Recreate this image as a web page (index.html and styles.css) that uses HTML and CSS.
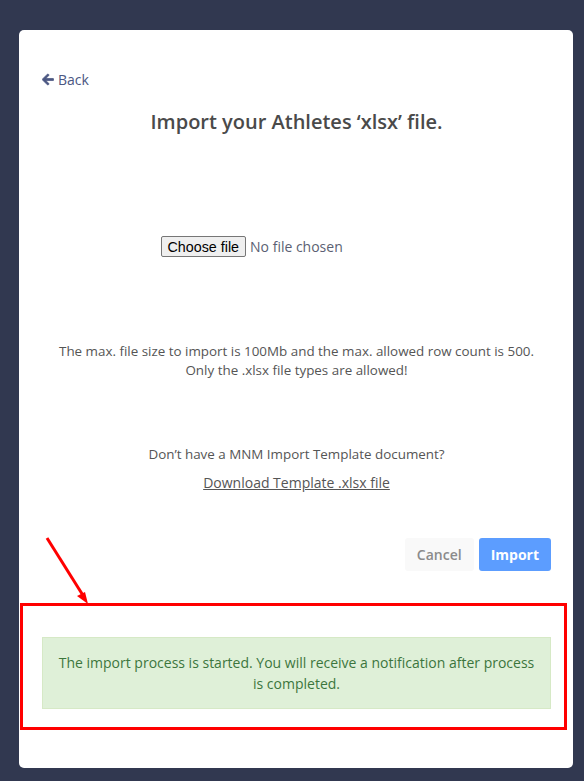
FILE: index.html
```html
<!DOCTYPE html>
<html>
<head>
<meta charset="utf-8">
<link rel="stylesheet" href="styles.css">
</head>
<body>
<div class="card">
  <a class="back" href="#"><svg class="back-icon" viewBox="0 0 448 512" width="12" height="13"><path fill="currentColor" d="M257.5 445.1l-22.2 22.2c-9.4 9.4-24.6 9.4-33.900 0L7 273c-9.4-9.4-9.4-24.6 0-33.9L201.4 44.7c9.4-9.4 24.6-9.4 33.9 0l22.2 22.2c9.5 9.5 9.3 25-.4 34.3L136.6 216H424c13.3 0 24 10.7 24 24v32c0 13.3-10.7 24-24 24H136.6l120.5 114.8c9.8 9.3 10 24.8.4 34.3z"/></svg><span>Back</span></a>
  <h2 class="title">Import your Athletes ‘xlsx’ file.</h2>
  <div class="file-row">
    <button class="file-btn" type="button">Choose file</button><span class="file-name">No file chosen</span>
  </div>
  <p class="limits">The max. file size to import is 100Mb and the max. allowed row count is 500.<br>Only the .xlsx file types are allowed!</p>
  <p class="template-q">Don’t have a MNM Import Template document?</p>
  <p class="template-link"><a href="#">Download Template .xlsx file</a></p>
  <div class="actions">
    <button class="btn btn-cancel" type="button">Cancel</button>
    <button class="btn btn-import" type="button">Import</button>
  </div>
  <div class="highlight">
    <div class="alert">The import process is started. You will receive a notification after process is completed.</div>
  </div>
  <svg class="pointer" width="50" height="72" viewBox="0 0 50 72">
    <line x1="1" y1="1" x2="38" y2="60" stroke="#ff0000" stroke-width="3"/>
    <polygon points="42,67 31,59 39,55" fill="#ff0000"/>
  </svg>
</div>
</body>
</html>
```

FILE: styles.css
```css
html, body {
  margin: 0;
  padding: 0;
}
body {
  background: #313850;
  font-family: "Open Sans", "DejaVu Sans", sans-serif;
  padding: 30px 11px 14px 19px;
}
.card {
  position: relative;
  background: #ffffff;
  border-radius: 5px;
  padding: 38px 22px 38px 23px;
  color: #555555;
}
.back {
  display: flex;
  align-items: center;
  gap: 4px;
  height: 22px;
  font-size: 14px;
  color: #4b5782;
  text-decoration: none;
}
.back-icon {
  display: block;
  stroke: currentColor;
  stroke-width: 30;
}
.title {
  margin: 18px 0 0;
  text-align: center;
  font-size: 20px;
  line-height: 28px;
  font-weight: 600;
  color: #4a4a4a;
}
.file-row {
  width: 272px;
  margin: 100px auto 0;
  display: flex;
  align-items: center;
  height: 21px;
}
.file-btn {
  font-family: "Liberation Sans", Arial, sans-serif;
  font-size: 14.3px;
  color: #000;
  background: #efefef;
  border: 1px solid #767676;
  border-radius: 2px;
  height: 21px;
  padding: 0 6px;
  margin: 0 4px 0 0;
}
.file-name {
  font-size: 14px;
  color: #5b5f73;
}
.limits {
  margin: 85px 0 0;
  text-align: center;
  font-size: 13.4px;
  line-height: 19px;
  color: #555;
}
.template-q {
  margin: 64px 0 0;
  text-align: center;
  font-size: 13.4px;
  line-height: 20px;
  color: #555;
}
.template-link {
  margin: 9px 0 0;
  text-align: center;
  font-size: 14px;
  line-height: 20px;
}
.template-link a {
  color: #555;
  text-decoration: underline;
}
.actions {
  margin-top: 45px;
  display: flex;
  justify-content: flex-end;
  gap: 5px;
}
.btn {
  font-family: "Open Sans", sans-serif;
  font-size: 14px;
  height: 33px;
  border: none;
  border-radius: 3px;
  padding: 0 12px;
}
.btn-cancel {
  background: #f9f9f9;
  color: #8b8b8b;
  font-weight: 600;
}
.btn-import {
  background: #5c9dff;
  color: #ffffff;
  font-weight: 700;
}
.highlight {
  margin: 32px -16px 0 -22px;
  border: 3px solid #ff0000;
  padding: 31px 13px 18px 19px;
}
.alert {
  background: #dff0d8;
  border: 1px solid #d6e9c6;
  color: #3c763d;
  text-align: center;
  font-size: 14px;
  line-height: 21px;
  padding: 14px 15px;
}
.pointer {
  position: absolute;
  left: 27px;
  top: 507px;
  overflow: visible;
}
```
